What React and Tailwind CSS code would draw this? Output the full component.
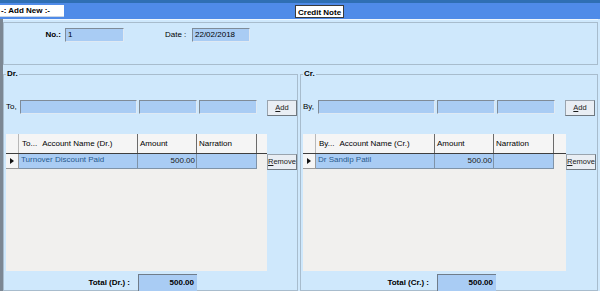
import { useState } from 'react'

const inputCls = 'h-[14px] bg-[#a9ccf4] border-t border-l border-[#7f8b98] border-r-[#dfe9f3] border-b-[#dfe9f3] border-r border-b text-[8px] leading-[12px] px-[2px]'
const btnCls = 'h-[16px] w-[30px] bg-[#e9eef4] border border-[#9aa4ae] border-b-[#6f7880] border-r-[#6f7880] text-[7.5px] leading-[14px] text-center text-[#1b1b1b]'

function Input({ w, value, bold }) {
  return (
    <div className={`${inputCls} ${w} ${bold ? 'font-bold text-right' : ''}`}>{value}</div>
  )
}

function Grid({ prefix, title, rows, w }) {
  return (
    <div className={`${w} h-[137px] bg-[#f1f0ee] ml-[2px]`}>
      <div className="flex h-[20px] bg-[#f5f5f5] border-b border-[#3e3e3e]">
        <div className="w-[13px] border-r border-[#b8b8b8]" />
        <div className="w-[119px] border-r border-[#6b6b6b] flex items-center pl-[3px]">
          <span>{prefix}</span>
          <span className="ml-[5px]">{title}</span>
        </div>
        <div className="w-[59px] border-r border-[#6b6b6b] flex items-center pl-[2px]">Amount</div>
        <div className="w-[60px] border-r border-[#6b6b6b] flex items-center pl-[2px]">Narration</div>
      </div>
      {rows.map(r => (
        <div key={r.name} className="flex h-[15px]">
          <div className="w-[13px] bg-[#f5f5f5] border-r border-b border-[#9a9a9a] flex items-center justify-center">
            <svg width="4" height="6" viewBox="0 0 4 6"><path d="M0 0 L4 3 L0 6 Z" fill="#111" /></svg>
          </div>
          <div className="w-[119px] bg-[#a9ccf4] border-r border-b border-[#7f93a8] pl-[2px] leading-[11px] text-[#2a5b8e]">{r.name}</div>
          <div className="w-[59px] bg-[#a9ccf4] border-r border-b border-[#7f93a8] pr-[1px] leading-[13px] text-right text-[#222]">{r.amount}</div>
          <div className="w-[60px] bg-[#a9ccf4] border-r border-b border-[#7f93a8]" />
        </div>
      ))}
    </div>
  )
}

function Side({ legend, lead, prefix, title, rows, total, totalLabel, outer, labelW, gridW, labelBox }) {
  return (
    <fieldset className={`${outer} border border-[#a8bccd] h-[222px] min-w-0`}>
      <legend className="ml-[2px] px-[1px] font-bold leading-[10px]">{legend}</legend>
      <div className="flex items-center mt-[19px]">
        <div className={`${labelW} pl-[2px]`}>{lead}</div>
        <Input w="w-[117px]" />
        <Input w="w-[58px] ml-[2px]" />
        <Input w="w-[58px] ml-[2px]" />
        <button className={`${btnCls} ml-[10px] mt-[2px]`}><u>A</u>dd</button>
      </div>
      <div className="flex mt-[18px]">
        <Grid prefix={prefix} title={title} rows={rows} w={gridW} />
        <button className={`${btnCls} mt-[20px] w-[29px]`}><u>R</u>emove</button>
      </div>
      <div className="flex items-center mt-[3px]">
        <div className={`${labelBox} text-right pr-[8px] font-bold`}>{totalLabel}</div>
        <div className="h-[17px] w-[59px] bg-[#a9ccf4] border-l border-t border-[#6f7c8a] font-bold text-right pr-[3px] leading-[16px]">{total}</div>
      </div>
    </fieldset>
  )
}

export default function App() {
  const [no] = useState('1')
  const [date] = useState('22/02/2018')

  return (
    <div className="w-[600px] h-[291px] overflow-hidden bg-[#cfe8fc] text-[8px] text-black font-['Liberation_Sans',Arial,sans-serif] flex flex-col">
      <div className="h-[3px] bg-[#2f6fb3]" />
      <div className="h-[16px] bg-[#4f8be8] flex items-center">
        <div className="h-[12px] w-[64px] bg-white font-bold leading-[12px] pl-[1px] border-b border-[#c9d6e6]">-: Add New :-</div>
        <div className="ml-[231px] h-[13px] bg-white px-[2px] font-bold leading-[13px] border border-[#3a3a3a]">Credit Note</div>
      </div>
      <div className="flex-1 flex flex-col border-l-[3px] border-[#7c8793] pr-[2px]">
        <div className="h-[1px] bg-[#eef6fd]" />
        <div className="mt-[2px] h-[43px] border border-[#a8bccd] flex items-start pt-[5px]">
          <div className="w-[61px] text-right pr-[4px] font-bold leading-[14px]">No.:</div>
          <Input w="w-[59px]" value={no} />
          <div className="ml-[41px] w-[27px] leading-[14px]">Date :</div>
          <Input w="w-[58px]" value={date} />
        </div>
        <div className="flex mt-[4px]">
          <Side
            outer="w-[295px]"
            legend="Dr."
            lead="To,"
            labelW="w-[16px]"
            prefix="To..."
            title="Account Name (Dr.)"
            rows={[{ name: 'Turnover Discount Paid', amount: '500.00' }]}
            gridW="w-[261px]"
            totalLabel="Total (Dr.) :"
            labelBox="w-[134px]"
            total="500.00"
          />
          <Side
            outer="flex-1 ml-[2px]"
            legend="Cr."
            lead="By,"
            labelW="w-[17px]"
            prefix="By..."
            title="Account Name (Cr.)"
            rows={[{ name: 'Dr Sandip Patil', amount: '500.00' }]}
            gridW="w-[263px]"
            totalLabel="Total (Cr.) :"
            labelBox="w-[136px]"
            total="500.00"
          />
        </div>
      </div>
    </div>
  )
}
